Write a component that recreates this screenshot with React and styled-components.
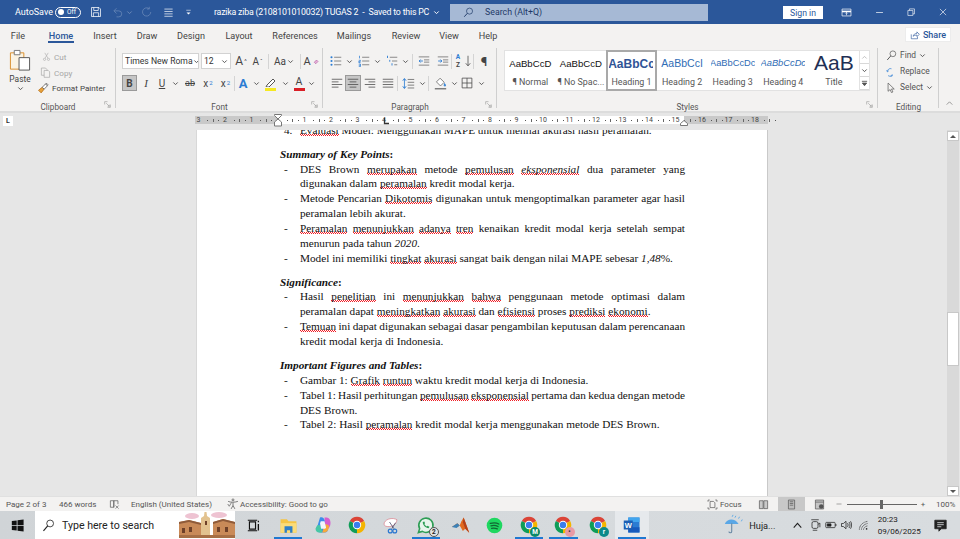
import React from "react";
import styled, { createGlobalStyle } from "styled-components";

const UI = 'Roboto, "Open Sans", sans-serif';
const Global = createGlobalStyle`
  html, body { margin: 0; padding: 0; background: #e6e6e6; overflow: hidden; }
  * { box-sizing: border-box; }
`;
const Shell = styled.div`width:960px;height:539px;display:flex;flex-direction:column;overflow:hidden;font-family:${UI};color:#444;`;

/* generic drawing */
const Svg = styled.svg`width:${p=>p.$s||14}px;height:${p=>p.$s||14}px;flex:none;display:block;fill:none;stroke:currentColor;stroke-width:1;`;
const Slot = styled.div`width:${p=>p.$w}px;height:100%;flex:none;display:flex;align-items:center;justify-content:center;color:${p=>p.$c||"inherit"};`;
const Chevron = ({c="#555"})=>(<Svg $s={7} viewBox="0 0 8 8" style={{color:c}}><path d="M1.5 2.8 4 5.3 6.5 2.8" strokeWidth="1.1"/></Svg>);

const B="#2b7cd3";const G="#666";
const paths={
  save:<><path d="M2 2h10l2 2v10H2z"/><path d="M5 2v4h6V2M4.5 14V9h7v5"/></>,
  undo:<><path d="M6 3 2.5 6.5 6 10"/><path d="M3 6.5h6a4 4 0 0 1 0 8H6"/></>,
  redo:<><path d="M13 8a5.5 5.5 0 1 1-2-4.3"/><path d="M11 1v3H8"/></>,
  menu:<path d="M2 3h12M2 6.5h12M2 10h12M2 13.5h12"/>,
  qat:<><path d="M4 4h8" /><path d="M4.5 8 8 11.5 11.5 8z" fill="currentColor" stroke="none"/></>,
  search:<><circle cx="9.5" cy="6" r="4.4"/><path d="M6.3 9.2 1.8 14.2" strokeWidth="1.4"/></>,
  display:<><path d="M1.5 3h13v10h-13z"/><path d="M1.5 6.5h13" strokeWidth="2.4"/><path d="M8 12V8M6.3 9.5 8 7.8l1.7 1.7"/></>,
  min:<path d="M3 8h10"/>,
  restore:<><path d="M3 5.5h8v8H3z"/><path d="M5.5 5.5V3h8v8H11"/></>,
  close:<path d="M3 3l10 10M13 3 3 13"/>,
  share:<><path d="M2 7v7h10v-3"/><path d="M5 10c.5-3 3-4.5 6-4.5V3l4 4-4 3.5V8c-2.5 0-4.5.7-6 2z"/></>,
  cut:<><circle cx="4.5" cy="13" r="2"/><circle cx="11.5" cy="13" r="2"/><path d="M5.5 11 11 1.5M10.500 11 5 1.500"/></>,
  copy:<><path d="M2 1.5h6l2 2v8.500H2z"/><path d="M6 5h6l2 2v8H6z" fill="#f3f2f1"/></>,
  painter:<><path d="M7 7 2 11l3.500 3.500 4-5z" fill="#e8a33d" stroke="#b36b14"/><path d="M7 7l2.500 2.500L14 5l-2.500-2.500z" fill="#fff" stroke="#555"/><path d="M11 3l1.500-1.500 2 2L13 5" stroke="#555"/></>,
  launcher:<><path d="M1.500 8V1.500H8" /><path d="M14.500 8v6.500H8"/><path d="M5 5l7 7M12 8.500V12H8.500"/></>,
  erase:<><path d="M12 9 9 6 4.500 10.500l3 3z" fill="#e6b3d8" stroke="#a23a92"/></>,
  left:<path d="M1 3h14M1 6.500h9M1 10h14M1 13.500h9"/>,
  center:<path d="M1 3h14M3.500 6.500h9M1 10h14M3.500 13.500h9"/>,
  right:<path d="M1 3h14M6 6.500h9M1 10h14M6 13.500h9"/>,
  justify:<path d="M1 3h14M1 6.500h14M1 10h14M1 13.500h14"/>,
  bullets:<><circle cx="2" cy="3" r="1.400" fill={B} stroke="none"/><circle cx="2" cy="8" r="1.400" fill={B} stroke="none"/><circle cx="2" cy="13" r="1.400" fill={B} stroke="none"/><path d="M5.500 3H15M5.500 8H15M5.500 13H15" stroke={G}/></>,
  numbers:<><path d="M2 1v3.500M1 7h2.200v1.500H1V10h2.300M1 12h2.300v3.500H1M1 13.700h2" stroke={B}/><path d="M5.500 3H15M5.500 8H15M5.500 13H15" stroke={G}/></>,
  multi:<><path d="M2 1v3M5 6.500v2.500M8 11v3" stroke={B} strokeWidth="1.200"/><path d="M5 3h10M8 8h7M11 13h4" stroke={G}/></>,
  outdent:<><path d="M1 2.500h14M1 13.500h14M8 6.500h7M8 9.500h7" stroke={G}/><path d="M6.500 8H1.500M3.500 6 1.500 8l2 2" stroke={B} strokeWidth="1.200"/></>,
  indent:<><path d="M1 2.500h14M1 13.500h14M8 6.500h7M8 9.500h7" stroke={G}/><path d="M1.500 8h5M4.500 6l2 2-2 2" stroke={B} strokeWidth="1.200"/></>,
  sortarrow:<path d="M8 1v13M5 11l3 3.500 3-3.500"/>,
  spacing:<><path d="M3 2v12" stroke={B}/><path d="M1 4.500 3 2l2 2.500M1 11.500 3 14l2-2.500" stroke={B} strokeWidth="1.200"/><path d="M7 3h8M7 6.500h8M7 10h8M7 13.500h8" stroke={G}/></>,
  shading:<><path d="M7.500 1.500 12.500 6.500 8 11 3 6z" fill="#fff" stroke={G}/><path d="M13 8c1 1.500 1.500 2 1 3-.5.500-1.500.300-1.500-1z" fill={B} stroke={B}/><path d="M1 14.500h14" stroke={G} strokeWidth="1.500"/></>,
  borders:<path d="M1.500 1.500h13v13h-13zM8 1.500v13M1.500 8h13"/>,
  find:<><circle cx="10" cy="5.500" r="4.200"/><path d="M7 8.500 1.800 14.500" strokeWidth="1.400"/></>,
  replaceA:<><path d="M8 4a4.500 4.500 0 0 0-6 4" stroke={B}/><path d="M3 14a5 5 0 0 0 6 0" stroke={B}/><path d="M1 6l1 2.500 2-1.500M9 12v2.500H6.500" stroke={B}/></>,
  select:<path d="M3 1.500v12l3-2.500 2 4.500 2-1-2-4.300h4z"/>,
  up:<path d="M3 10l5-5 5 5"/>,
  proof:<><path d="M2 2.500h5v9.500H2zM7 2.500h6v5"/><path d="M7 2.500V12"/><path d="M9.500 9.500l4.500 4.500M14 9.500 9.500 14" stroke={G}/></>,
  access:<><circle cx="8" cy="2.500" r="1.300"/><path d="M1.500 4.500c3 1.500 9 1.500 13 0M8 6v4M8 10l-2.500 4.500M8 10l2.500 4.500"/><path d="M1 8l2 3 3-5" stroke={G}/></>,
  focus:<><path d="M1.500 4V1.500H4M12 1.500h2.500V4M14.500 12v2.500H12M4 14.500H1.500V12"/><path d="M4.500 3.500h5l2 2v7h-7z"/></>,
  read:<><path d="M2 2.500h5.500v11.500H2zM8.500 2.500H14v11.500H8.500z" fill="#c9c9c9"/></>,
  print:<path d="M3.500 1.500h9v13h-9zM5.500 4h5M5.500 6.500h5M5.500 9h5" fill="#bdbdbd"/>,
  web:<><path d="M2 1.500h12v13H2zM2 4.500h12" fill="#c5c5c5"/><circle cx="10.500" cy="11" r="3.300" fill="#555" stroke="none"/></>,
  windows:<path d="M1 2.600 7 1.800v5.800H1zM8 1.600l7.500-1v7H8zM1 8.500h6v5.700l-6-.8zM8 8.500h7.500v6.900l-7.500-1z" fill="currentColor" stroke="none"/>,
  taskview:<><path d="M3 3.500h7.500v9H3zM1 1.500h11.500M1 14.500h11.500" strokeWidth="1.400"/><path d="M14 2v2M14 6v8" strokeWidth="1.600"/></>,
  caretup:<path d="M2.500 11 8 5l5.500 6" strokeWidth="1.600"/>,
  meet:<><rect x="4" y="3.500" width="8" height="9" rx="2"/><path d="M12 7l2.500-1.500V11"/><path d="M3 1h10M5 15h6"/></>,
  battery:<><rect x="1" y="4.500" width="12.500" height="7" rx="1"/><path d="M3 6.500h5v3H3z" fill="currentColor"/><path d="M14.500 7v2" strokeWidth="1.500"/></>,
  sound:<><path d="M2 6v4h2.500l3.500 3V3L4.500 6z"/><path d="M10 5.500c1 1.500 1 3.500 0 5M12 4c1.800 2.500 1.800 5.500 0 8M14 3c2 3 2 7 0 10"/></>,
  wifi:<><path d="M2 14c0-6 5-11 12-12M5 14c0-4 4-8 9-9M8 14c0-2.500 3-5 6-5.500" strokeDasharray="1.400 .6"/><circle cx="12.500" cy="13" r="1.200" fill="currentColor" stroke="none"/></>,
  notif:<><path d="M1 1.500h14v10.500H9l-3 3v-3H1z" fill="currentColor"/><path d="M4 4.500h8M4 7h8M4 9.500h5" stroke="#e4e7ea"/></>,
};
const I=({n,s=14,c})=><Svg $s={s} viewBox="0 0 16 16" style={c?{color:c}:undefined}>{paths[n]}</Svg>;

/* title bar */
const TitleBar=styled.div`height:24px;background:#2b579a;color:#fff;display:flex;align-items:center;flex:none;font-size:9px;`;
const AutoLabel=styled.span`margin-left:15px;width:40px;white-space:nowrap;`;
const Toggle=styled.div`width:26px;height:11px;border:1px solid #fff;border-radius:6px;display:flex;align-items:center;padding-left:2px;gap:3px;font-size:6.5px;`;
const Knob=styled.i`width:6px;height:6px;border-radius:50%;background:#fff;display:block;`;
const DocTitle=styled.div`width:236px;white-space:nowrap;font-size:8.8px;letter-spacing:-.2px;margin-left:21px;display:flex;align-items:center;gap:4px;`;
const SearchBox=styled.div`width:258px;height:17px;background:#a6b9d5;color:#1f3a68;display:flex;align-items:center;padding-left:13px;gap:11px;font-size:8.8px;`;
const SignIn=styled.div`width:40px;height:13px;margin-left:75px;margin-top:1px;background:#fff;color:#2b579a;font-size:8.7px;display:flex;align-items:center;justify-content:center;`;

/* tabs */
const TabRow=styled.div`height:23px;background:#f3f2f1;display:flex;flex:none;align-items:stretch;position:relative;`;
const Tab=styled.div`width:${p=>p.$w}px;flex:none;display:flex;align-items:center;justify-content:center;font-size:9.1px;position:relative;color:${p=>p.$on?"#2b579a":"#444"};font-weight:${p=>p.$on?500:400};
  ${p=>p.$on?`&::after{content:"";position:absolute;left:12px;right:12px;bottom:4px;height:2px;background:#2b579a;}`:""}`;
const Share=styled.div`margin-left:399px;margin-top:3px;width:46px;height:15px;background:#fff;border:1px solid #ececec;color:#2b579a;font-size:9px;font-weight:500;display:flex;align-items:center;justify-content:center;gap:3px;`;

/* ribbon */
const Ribbon=styled.div`height:66px;background:#f3f2f1;display:flex;flex:none;border-bottom:2px solid #dcdcdc;position:relative;`;
const Group=styled.section`width:${p=>p.$w}px;flex:none;height:100%;display:flex;flex-direction:column;position:relative;
  ${p=>p.$end?"":`&::after{content:"";position:absolute;right:0;top:1px;bottom:3px;width:1px;background:#cfcfcf;}`}`;
const GroupBody=styled.div`height:49px;flex:none;display:flex;flex-direction:${p=>p.$col?"column":"row"};padding-left:${p=>p.$pl||0}px;`;
const GroupLabel=styled.div`flex:1;display:flex;align-items:center;justify-content:center;font-size:8.2px;color:#555;padding-top:6px;`;
const Launcher=styled.span`position:absolute;right:5px;bottom:3px;color:#777;`;
const Paste=styled.div`width:38px;margin-left:1px;display:flex;flex-direction:column;align-items:center;font-size:8.4px;line-height:12px;padding-top:2px;color:#444;`;
const PasteGlyph=styled.div`height:23px;margin-bottom:1px;`;
const ClipList=styled.div`display:flex;flex-direction:column;padding-top:2px;margin-left:-2px;`;
const ClipItem=styled.div`height:17px;display:flex;align-items:center;font-size:8.1px;color:${p=>p.$off?"#a6a6a6":"#444"};gap:3px;padding-left:${p=>p.$pl||0}px;white-space:nowrap;`;
const Tools=styled.div`display:flex;flex-direction:column;padding-top:6px;gap:6px;`;
const ToolRow=styled.div`height:16px;display:flex;align-items:center;`;
const Combo=styled.div`width:${p=>p.$w}px;height:16px;margin-right:2px;background:#fff;border:1px solid #d2d2d2;display:flex;align-items:center;justify-content:space-between;padding:0 2px 0 2px;font-size:8.6px;color:#333;white-space:nowrap;flex:none;overflow:hidden;`;
const Glyph=styled.div`width:${p=>p.$w}px;flex:none;height:16px;display:flex;align-items:center;justify-content:center;font-family:${p=>p.$serif?'"Liberation Serif",serif':UI};font-size:${p=>p.$fs||10}px;font-weight:${p=>p.$b?700:400};font-style:${p=>p.$i?"italic":"normal"};color:${p=>p.$c||"#444"};text-decoration:${p=>p.$u||"none"};gap:1px;
  ${p=>p.$on?"background:#c6c6c6;border:1px solid #9a9a9a;":""}`;
const Sep=styled.i`width:${p=>p.$w||1}px;flex:none;height:15px;display:flex;justify-content:center;&::before{content:"";display:block;width:1px;height:100%;background:#d4d4d4;}`;
const ColorA=styled.div`width:${p=>p.$w}px;height:16px;flex:none;display:flex;flex-direction:column;align-items:center;justify-content:flex-end;font-size:10.500px;line-height:10px;color:#444;`;
const Swatch=styled.i`display:block;width:11px;height:3px;background:${p=>p.$c};margin-top:1px;`;
const Sub=styled.sub`font-size:6px;color:${B};line-height:0;`;
const Sup=styled.sup`font-size:6px;color:${p=>p.$c||B};line-height:0;`;
const SortStack=styled.div`width:${p=>p.$w}px;height:16px;flex:none;display:flex;flex-direction:column;align-items:center;justify-content:center;font-weight:700;`;
const SortLetter=styled.span`font-size:6.5px;line-height:8px;height:8px;color:${p=>p.$c||"#444"};`;

const Gallery=styled.div`margin:3px 0 0 7px;width:366px;height:41px;background:#fff;border:1px solid #e2e2e2;display:flex;`;
const Style=styled.div`width:50.600px;flex:none;overflow:hidden;height:${p=>p.$sel?"41px":"39px"};display:flex;flex-direction:column;align-items:center;${p=>p.$sel?"border:2px solid #a9a9a9;margin-top:-1px;":""}`;
const Sample=styled.div`height:24px;width:44px;display:flex;align-items:center;justify-content:center;overflow:hidden;white-space:nowrap;font-family:"Liberation Sans",sans-serif;font-size:${p=>p.$fs}px;color:${p=>p.$c};font-weight:${p=>p.$b?600:400};font-style:${p=>p.$i?"italic":"normal"};`;
const StyleName=styled.div`font-size:8.9px;color:#555;white-space:nowrap;height:14px;line-height:14px;`;
const Scrollers=styled.div`margin-left:auto;width:10px;display:flex;flex-direction:column;border-left:1px solid #e2e2e2;`;
const ScrollBtn=styled.div`flex:1;display:flex;align-items:center;justify-content:center;background:#fff;border-bottom:1px solid #d8d8d8;color:${p=>p.$off?"#bbb":"#555"};`;
const EditList=styled.div`display:flex;flex-direction:column;`;
const EditItem=styled.div`height:16px;display:flex;align-items:center;gap:3px;font-size:8.4px;color:#555;padding-left:8px;white-space:nowrap;`;
const Collapse=styled.div`width:21px;display:flex;align-items:flex-end;justify-content:center;padding-bottom:3px;color:#555;`;

/* ruler */
const RulerRow=styled.div`height:17px;background:#e6e6e6;display:flex;flex:none;padding-top:3px;position:relative;`;
const TabMark=styled.div`width:10px;height:10px;margin-left:3px;background:#fff;display:flex;align-items:center;justify-content:center;font-size:7px;font-weight:700;color:#333;`;
const RulerStrip=styled.div`margin-left:182px;width:573px;height:8px;padding-left:3.500px;display:flex;position:relative;background:linear-gradient(90deg,#c9c9c9 0 83px,#fff 83px 489px,#c9c9c9 489px);`;
const Cm=styled.div`width:26.500px;flex:none;height:100%;display:flex;align-items:center;justify-content:space-between;padding-right:6px;font-size:7px;color:#444;`;
const CmNum=styled.span`width:8px;margin-left:-4px;text-align:center;line-height:8px;`;
const Dot=styled.i`width:1px;height:1px;background:#555;display:block;`;
const Tick=styled.i`width:1px;height:3px;background:#666;display:block;`;
const RulerMark=styled.span`position:absolute;left:${p=>p.$x}px;top:${p=>p.$y}px;color:#555;line-height:0;`;

/* document */
const DocArea=styled.div`height:366px;background:#e6e6e6;display:flex;flex:none;overflow:hidden;`;
const PageSheet=styled.main`margin-left:196px;width:572px;height:100%;background:#fff;border-right:1px solid #c9c9c9;border-left:1px solid #d8d8d8;padding-left:83px;font-family:"Liberation Serif","Times New Roman",serif;font-size:11.240px;line-height:14.830px;color:#111;overflow:hidden;`;
const Body=styled.div`margin-top:-7.400px;width:405px;`;
const Heading=styled.div`font-weight:700;margin-top:9.300px;`;
const Em=styled.em`font-style:italic;`;
const Item=styled.div`display:flex;`;
const Dash=styled.span`width:20px;flex:none;padding-left:4px;`;
const ItemText=styled.div`flex:1;min-width:0;`;
const Line=styled.div`white-space:nowrap;word-spacing:${p=>p.$ws||0}px;${p=>p.$j?"text-align:justify;text-align-last:justify;":""}`;
const Sq=styled.span`background-image:repeating-linear-gradient(90deg,#f01c24 0 1px,transparent 1px 2px),repeating-linear-gradient(90deg,transparent 0 1px,#f01c24 1px 2px);background-size:100% 1px;background-repeat:no-repeat;background-position:0 calc(100% - 1px),0 100%;`;
const Scrollbar=styled.aside`margin-left:179px;width:12px;height:100%;background:#d9d9d9;display:flex;flex-direction:column;position:relative;padding-top:1px;`;
const SbBtn=styled.div`height:10px;background:#fff;border:1px solid #c8c8c8;display:flex;align-items:center;justify-content:center;flex:none;`;
const SbArrow=styled.i`display:block;width:0;height:0;border-left:3px solid transparent;border-right:3px solid transparent;${p=>p.$down?"border-top:3px solid #555;":"border-bottom:3px solid #555;"}`;
const SbThumb=styled.div`position:absolute;left:0;right:0;top:182px;height:54px;background:#fff;border:1px solid #c8c8c8;`;
const SbGap=styled.div`flex:1;`;

/* status */
const StatusBar=styled.footer`height:15px;background:#f3f2f1;border-top:1px solid #e0e0e0;flex:none;display:flex;align-items:center;font-size:8px;color:#555;white-space:nowrap;padding-right:6px;`;
const Stat=styled.div`margin-left:${p=>p.$ml||0}px;height:100%;display:flex;align-items:center;gap:${p=>p.$gap||0}px;flex:none;width:${p=>p.$w?p.$w+"px":"auto"};justify-content:${p=>p.$center?"center":"flex-start"};background:${p=>p.$on?"#c8c8c8":"transparent"};`;
const StatusEnd=styled.div`margin-left:auto;height:100%;display:flex;align-items:center;flex:none;`;
const Slider=styled.div`margin-left:4px;width:70px;height:1px;background:#666;position:relative;flex:none;`;
const SliderThumb=styled.i`position:absolute;left:33px;top:-4px;width:3px;height:9px;background:#666;display:block;`;

/* taskbar */
const Taskbar=styled.nav`height:28px;flex:none;background:linear-gradient(90deg,#d0d4d7,#d6dadd 60%,#d8dcdf);display:flex;align-items:stretch;color:#111;`;
const Start=styled.div`width:35px;flex:none;display:flex;align-items:center;justify-content:center;`;
const SearchTask=styled.div`width:200px;flex:none;background:#fff;display:flex;align-items:center;padding-left:7px;gap:7px;font-size:10.600px;color:#222;white-space:nowrap;position:relative;overflow:hidden;`;
const Scene=styled.span`position:absolute;right:0;top:0;line-height:0;`;
const Pin=styled.div`width:${p=>p.$w||34.400}px;flex:none;display:flex;align-items:center;justify-content:center;position:relative;background:${p=>p.$active?"#e6e9ec":"transparent"};
  ${p=>p.$run?`&::after{content:"";position:absolute;left:3px;right:3px;bottom:0;height:2px;background:#1f78d1;}`:""}`;
const Badge=styled.span`position:absolute;right:${p=>p.$r||5}px;bottom:${p=>p.$b||2}px;width:10px;height:10px;border-radius:50%;background:${p=>p.$c};color:${p=>p.$t||"#fff"};font-size:6.500px;font-weight:700;line-height:10px;text-align:center;${p=>p.$ring?"border:1px solid #555;line-height:8px;":""}`;
const Weather=styled.div`margin-left:74px;display:flex;align-items:center;gap:4px;font-size:9.2px;width:66px;flex:none;color:#222;`;
const Tray=styled.div`width:${p=>p.$w}px;flex:none;display:flex;align-items:center;justify-content:center;color:#222;`;
const Clock=styled.div`width:40px;margin-left:6px;flex:none;display:flex;flex-direction:column;align-items:center;justify-content:center;font-size:8.100px;line-height:12px;color:#222;white-space:nowrap;`;

const Chrome=({s=18})=>(<Svg $s={s} viewBox="0 0 24 24" style={{stroke:"none"}}>
  <path d="M12 12 2.470 6.500A11 11 0 0 1 21.530 6.500Z" fill="#db4437"/>
  <path d="M12 12 21.530 6.500A11 11 0 0 1 12 23Z" fill="#f4b400"/>
  <path d="M12 12 12 23A11 11 0 0 1 2.470 6.500Z" fill="#0f9d58"/>
  <circle cx="12" cy="12" r="5.600" fill="#fff"/><circle cx="12" cy="12" r="4.300" fill="#3b7ded"/></Svg>);

const Explorer=()=>(<Svg $s={19} viewBox="0 0 24 24" style={{stroke:"none"}}>
  <path d="M2 4h8l2 2.500h10V21H2z" fill="#f6c544"/><path d="M2 9h20v12H2z" fill="#fbdc7a"/>
  <path d="M7 13h10v8H14v-3h-4v3H7z" fill="#2f7fc8"/></Svg>);
const Copilot=()=>(<Svg $s={18} viewBox="0 0 24 24" style={{stroke:"none"}}>
  <path d="M8 2c3-1 5 0 6 3l4 12c1 3-1 5-4 5H9C5 22 3 20 3 17c0-2 1-3 2-5z" fill="#3b8dea"/>
  <path d="M14 2h3c3 0 5 3 5 7 0 3-1 6-3 8l-4-1z" fill="#d55fd0"/>
  <path d="M4 13c2-2 5-1 6 2l1 7H7c-3 0-5-2-5-5z" fill="#47c7a5"/>
  <path d="M14 11c2 0 5 0 6 2 0 4-2 9-6 9h-3z" fill="#f7a93b"/>
  <path d="M9 7h5l2 8-1 2H9.500L8 10z" fill="#f3f5fb"/></Svg>);
const Snip=()=>(<Svg $s={18} viewBox="0 0 24 24" style={{stroke:"none"}}>
  <path d="M3 9c3-6 12-7 17-4-1 6-6 10-13 9-3 0-5-2-4-5z" fill="#fff" stroke="#d9838f"/>
  <path d="M10 8l6 9M18 9l-5 8" stroke="#446" strokeWidth="1" fill="none"/>
  <circle cx="11" cy="20" r="2.600" fill="none" stroke="#2a77d0" strokeWidth="1.600"/><circle cx="17" cy="20" r="2.600" fill="none" stroke="#2a77d0" strokeWidth="1.600"/></Svg>);
const Whatsapp=()=>(<Svg $s={19} viewBox="0 0 24 24" style={{stroke:"#2f9e56",strokeWidth:2}}>
  <path d="M3 21l1.600-5A9 9 0 1 1 8 19.500z" fill="#e9f5ec"/>
  <path d="M8.500 7.500c0 4 3.500 7.500 7.500 8l1-2-2.500-1.300-1 1c-1.500-.7-2.500-1.800-3-3l1-1L10.500 7z" fill="#2f9e56" stroke="none"/></Svg>);
const Matlab=()=>(<Svg $s={19} viewBox="0 0 24 24" style={{stroke:"none"}}>
  <path d="M1 14 8 9l3 3 2-5 3-5 7 19-5-5-3 3-4-7-3 2z" fill="#e26a1f"/>
  <path d="M1 14 8 9l3 3-4 3z" fill="#3c82b8"/><path d="M16 2l7 19-5-5-3-8z" fill="#b3411a"/></Svg>);
const Spotify=()=>(<Svg $s={17} viewBox="0 0 24 24" style={{stroke:"none"}}>
  <circle cx="12" cy="12" r="11" fill="#1ed760"/>
  <path d="M6 9c4-1 9-1 12 1M7 12.500c3-1 7-.8 10 1M8 16c3-.7 5-.5 8 .8" stroke="#163" strokeWidth="1.800" fill="none" strokeLinecap="round"/></Svg>);
const Word=()=>(<Svg $s={18} viewBox="0 0 24 24" style={{stroke:"none"}}>
  <path d="M7 2h15v20H7z" fill="#2b7cd3"/><path d="M7 2h15v6H7z" fill="#41a5ee"/><path d="M7 15h15v7H7z" fill="#185abd"/>
  <path d="M1 6h12v12H1z" fill="#1d5fb4"/><text x="7" y="15.500" textAnchor="middle" fontSize="10" fontWeight="700" fill="#fff" fontFamily="Liberation Sans">W</text></Svg>);
const Rain=()=>(<Svg $s={22} viewBox="0 0 24 24" style={{stroke:"none"}}>
  <path d="M2 11C4 5 13 4 17 11z" fill="#5aa7e6"/><path d="M9.500 10v9c0 2-3 2-3 0" stroke="#6b8aa5" strokeWidth="1.200" fill="none"/>
  <path d="M14 2l-1 2M18 3l-1 2M21 6l-1 2M11 1l-1 2" stroke="#5aa7e6" strokeWidth="1"/></Svg>);
const Town=()=>(<svg width="56" height="27" viewBox="0 0 56 27">
  <ellipse cx="13" cy="5" rx="7" ry="3" fill="#eec3d2"/><ellipse cx="40" cy="4" rx="8" ry="3" fill="#eec3d2"/>
  <path d="M0 27V11l10-2 12 3v15z" fill="#c98a58"/><path d="M34 27V11l10-3 12 3v16z" fill="#c98a58"/>
  <path d="M0 11 10 9l12 3v2L10 11 0 13zM34 11l10-3 12 3v2l-12-3-10 3z" fill="#8f5b3a"/>
  <path d="M22 27V7l3-2 .5-4h2l.5 4 3 2v20z" fill="#e2c28f"/><path d="M26 10h2v4h-2zM3 17h3v5H3zM10 16h3v5h-3zM38 16h3v5h-3zM46 16h3v5h-3z" fill="#6e4028"/>
  <path d="M0 24h56v3H0z" fill="#a66f45"/></svg>);

const tabs=[["File",36],["Home",50,1],["Insert",38],["Draw",46],["Design",42],["Layout",54],["References",58],["Mailings",60],["Review",44],["View",42],["Help",36]];
const styleSet=[
  {s:"AaBbCcD",n:"¶ Normal",fs:9.600,c:"#111"},
  {s:"AaBbCcD",n:"¶ No Spac...",fs:9.600,c:"#111"},
  {s:"AaBbCc",n:"Heading 1",fs:12,c:"#2f5496",b:1,sel:1},
  {s:"AaBbCcI",n:"Heading 2",fs:10.500,c:"#2f6cb5"},
  {s:"AaBbCcDc",n:"Heading 3",fs:9.300,c:"#2f6cb5"},
  {s:"AaBbCcDc",n:"Heading 4",fs:9.300,c:"#2f6cb5",i:1},
  {s:"AaB",n:"Title",fs:21,c:"#1f2f54"},
];
const cms=[3,2,1,0,1,2,3,4,5,6,7,8,9,10,11,12,13,14,15,16,17,18];

export default function App(){
  return <Shell><Global/>
    <TitleBar>
      <AutoLabel>AutoSave</AutoLabel>
      <Toggle><Knob/>Off</Toggle>
      <Slot $w={9}/><Slot $w={12}><I n="save" s={12}/></Slot>
      <Slot $w={9}/><Slot $w={14} $c="#6b89b8"><I n="undo" s={12}/></Slot><Slot $w={8} $c="#6b89b8"><Chevron c="#6b89b8"/></Slot>
      <Slot $w={8}/><Slot $w={12} $c="#6b89b8"><I n="redo" s={12}/></Slot>
      <Slot $w={9}/><Slot $w={12}><I n="menu" s={11}/></Slot>
      <Slot $w={9}/><Slot $w={10}><I n="qat" s={9}/></Slot>
      <DocTitle>razika ziba (2108101010032) TUGAS 2&nbsp; -&nbsp; Saved to this PC <Chevron c="#fff"/></DocTitle>
      <SearchBox><I n="search" s={11} c="#1f3a68"/>Search (Alt+Q)</SearchBox>
      <SignIn>Sign in</SignIn>
      <Slot $w={14}/><Slot $w={18}><I n="display" s={11}/></Slot>
      <Slot $w={15}/><Slot $w={18}><I n="min" s={11}/></Slot>
      <Slot $w={14}/><Slot $w={18}><I n="restore" s={10}/></Slot>
      <Slot $w={14}/><Slot $w={18}><I n="close" s={10}/></Slot>
    </TitleBar>

    <TabRow>
      {tabs.map(([t,w,on])=><Tab key={t} $w={w} $on={on}>{t}</Tab>)}
      <Share><I n="share" s={10}/>Share</Share>
    </TabRow>

    <Ribbon>
      <Group $w={116}>
        <GroupBody>
          <Paste><PasteGlyph>
            <svg width="24" height="23" viewBox="0 0 24 24"><path d="M2 4h14v17H2z" fill="#fbf3e2" stroke="#d98e2b"/><path d="M6 1.500h6V6H6z" fill="#fff" stroke="#777"/><path d="M11 9h11v13H11z" fill="#fff" stroke="#555"/></svg>
          </PasteGlyph>Paste<Chevron/></Paste>
          <ClipList>
            <ClipItem $off $pl={5}><I n="cut" s={9}/>Cut</ClipItem>
            <ClipItem $off $pl={3}><I n="copy" s={11}/>Copy</ClipItem>
            <ClipItem $pl={0}><I n="painter" s={12}/>Format Painter</ClipItem>
          </ClipList>
        </GroupBody>
        <GroupLabel>Clipboard</GroupLabel>
        <Launcher><I n="launcher" s={7}/></Launcher>
      </Group>

      <Group $w={207}>
        <GroupBody $pl={6}>
          <Tools>
            <ToolRow>
              <Combo $w={77}>Times New Roma <Chevron/></Combo>
              <Combo $w={30}>12 <Chevron/></Combo>
              <Glyph $w={16} $fs={12}>A<Sup $c="#444">^</Sup></Glyph>
              <Glyph $w={17} $fs={10}>A<Sup $c="#444">ˇ</Sup></Glyph>
              <Sep $w={5}/>
              <Glyph $w={26} $fs={10}>Aa <Chevron/></Glyph>
              <Sep $w={7}/>
              <Glyph $w={15} $fs={11}>A<I n="erase" s={8}/></Glyph>
            </ToolRow>
            <ToolRow>
              <Glyph $w={15} $b $on $fs={10}>B</Glyph>
              <Glyph $w={18} $i $serif $fs={11}>I</Glyph>
              <Glyph $w={14} $u="underline" $fs={10}>U</Glyph>
              <Slot $w={12}><Chevron/></Slot>
              <Glyph $w={18} $u="line-through" $fs={9}>ab</Glyph>
              <Glyph $w={18} $fs={10}>x<Sub>2</Sub></Glyph>
              <Glyph $w={17} $fs={10}>x<Sup>2</Sup></Glyph>
              <Sep $w={1}/>
              <Glyph $w={16} $b $c="#2b7cd3" $fs={13}>A</Glyph>
              <Slot $w={10}><Chevron/></Slot>
              <ColorA $w={18}><svg width="11" height="9" viewBox="0 0 11 9"><path d="M2 7 8 1l2 2-6 6H1z" fill="#fff" stroke="#555"/></svg><Swatch $c="#f5e921"/></ColorA>
              <Slot $w={12}><Chevron/></Slot>
              <ColorA $w={16}>A<Swatch $c="#d91f26"/></ColorA>
              <Slot $w={9}><Chevron/></Slot>
            </ToolRow>
          </Tools>
        </GroupBody>
        <GroupLabel>Font</GroupLabel>
        <Launcher><I n="launcher" s={7}/></Launcher>
      </Group>

      <Group $w={174}>
        <GroupBody $pl={6}>
          <Tools>
            <ToolRow>
              <Slot $w={14}><I n="bullets" s={12}/></Slot><Slot $w={13}><Chevron/></Slot>
              <Slot $w={15}><I n="numbers" s={12}/></Slot><Slot $w={13}><Chevron/></Slot>
              <Slot $w={15}><I n="multi" s={12}/></Slot><Slot $w={13}><Chevron/></Slot>
              <Sep $w={1}/><Slot $w={22}><I n="outdent" s={12}/></Slot><Slot $w={16}><I n="indent" s={12}/></Slot>
              <Sep $w={1}/>
              <SortStack $w={12}><SortLetter $c="#2b7cd3">A</SortLetter><SortLetter>Z</SortLetter></SortStack>
              <Slot $w={8}><I n="sortarrow" s={12}/></Slot>
              <Sep $w={3}/>
              <Glyph $w={18} $b $fs={13}>¶</Glyph>
            </ToolRow>
            <ToolRow>
              <Slot $w={16}><I n="left" s={12}/></Slot>
              <Glyph $w={16} $on><I n="center" s={12}/></Glyph>
              <Slot $w={18}><I n="right" s={12}/></Slot>
              <Slot $w={17}><I n="justify" s={12}/></Slot>
              <Sep $w={3}/>
              <Slot $w={19}><I n="spacing" s={13}/></Slot><Slot $w={8}><Chevron/></Slot>
              <Sep $w={5}/>
              <Slot $w={18}><I n="shading" s={13}/></Slot><Slot $w={10}><Chevron/></Slot>
              <Slot $w={16}><I n="borders" s={12}/></Slot><Slot $w={12}><Chevron/></Slot>
            </ToolRow>
          </Tools>
        </GroupBody>
        <GroupLabel>Paragraph</GroupLabel>
        <Launcher><I n="launcher" s={7}/></Launcher>
      </Group>

      <Group $w={381}>
        <GroupBody>
          <Gallery>
            {styleSet.map(x=><Style key={x.n} $sel={x.sel}>
              <Sample $fs={x.fs} $c={x.c} $b={x.b} $i={x.i}>{x.s}</Sample>
              <StyleName>{x.n}</StyleName>
            </Style>)}
            <Scrollers>
              <ScrollBtn $off><Svg $s={7} viewBox="0 0 8 8"><path d="M1.500 5.200 4 2.700l2.500 2.500"/></Svg></ScrollBtn>
              <ScrollBtn><Chevron/></ScrollBtn>
              <ScrollBtn><Svg $s={7} viewBox="0 0 8 8"><path d="M1 1.500h6M1.500 3.500 4 6.500l2.500-3z" fill="currentColor"/></Svg></ScrollBtn>
            </Scrollers>
          </Gallery>
        </GroupBody>
        <GroupLabel>Styles</GroupLabel>
        <Launcher><I n="launcher" s={7}/></Launcher>
      </Group>

      <Group $w={61}>
        <GroupBody $col>
          <EditList>
            <EditItem><I n="find" s={11}/>Find <Chevron/></EditItem>
            <EditItem><I n="replaceA" s={11}/>Replace</EditItem>
            <EditItem><I n="select" s={11}/>Select <Chevron/></EditItem>
          </EditList>
        </GroupBody>
        <GroupLabel>Editing</GroupLabel>
      </Group>
      <Collapse><I n="up" s={9}/></Collapse>
    </Ribbon>

    <RulerRow>
      <TabMark>L</TabMark>
      <RulerStrip>
        {cms.map((n,i)=><Cm key={i}>
          <CmNum>{n===0?"":n}</CmNum><Dot/><Tick/><Dot/>
        </Cm>)}
        <RulerMark $x={79} $y={-2}><svg width="8" height="13" viewBox="0 0 8 13"><path d="M.5.500h7v1L4 5 .5 1.500zM4 5l3.500 3v4H.5V8z" fill="#fff" stroke="#777"/></svg></RulerMark>
        <RulerMark $x={188} $y={2}><svg width="6" height="7" viewBox="0 0 6 7"><path d="M1.500 0v5.500H6" fill="none" stroke="#333" strokeWidth="1.300"/></svg></RulerMark>
        <RulerMark $x={485} $y={4}><svg width="8" height="6" viewBox="0 0 8 6"><path d="M.5 5.500v-2L4 .5l3.500 3v2z" fill="#fff" stroke="#777"/></svg></RulerMark>
      </RulerStrip>
    </RulerRow>

    <DocArea>
      <PageSheet>
        <Body>
          <Item><Dash>4.</Dash><ItemText><Line><Sq>Evaluasi</Sq> Model: Menggunakan MAPE untuk menilai akurasi hasil peramalan.</Line></ItemText></Item>
          <Heading><Em>Summary of Key Points</Em>:</Heading>
          <Item><Dash>-</Dash><ItemText>
            <Line $j>DES Brown <Sq>merupakan</Sq> metode <Sq>pemulusan</Sq> <Em><Sq>eksponensial</Sq></Em> dua parameter yang</Line>
            <Line>digunakan dalam <Sq>peramalan</Sq> kredit modal kerja.</Line>
          </ItemText></Item>
          <Item><Dash>-</Dash><ItemText>
            <Line $j>Metode Pencarian <Sq>Dikotomis</Sq> digunakan untuk mengoptimalkan parameter agar hasil</Line>
            <Line>peramalan lebih akurat.</Line>
          </ItemText></Item>
          <Item><Dash>-</Dash><ItemText>
            <Line $j><Sq>Peramalan</Sq> <Sq>menunjukkan</Sq> <Sq>adanya</Sq> <Sq>tren</Sq> kenaikan kredit modal kerja setelah sempat</Line>
            <Line>menurun pada tahun <Em>2020</Em>.</Line>
          </ItemText></Item>
          <Item><Dash>-</Dash><ItemText>
            <Line>Model ini memiliki <Sq>tingkat</Sq> <Sq>akurasi</Sq> sangat baik dengan nilai MAPE sebesar <Em>1,48</Em>%.</Line>
          </ItemText></Item>
          <Heading><Em>Significance</Em>:</Heading>
          <Item><Dash>-</Dash><ItemText>
            <Line $j>Hasil <Sq>penelitian</Sq> ini <Sq>menunjukkan</Sq> <Sq>bahwa</Sq> penggunaan metode optimasi dalam</Line>
            <Line>peramalan dapat <Sq>meningkatkan</Sq> <Sq>akurasi</Sq> dan <Sq>efisiensi</Sq> proses <Sq>prediksi</Sq> <Sq>ekonomi</Sq>.</Line>
          </ItemText></Item>
          <Item><Dash>-</Dash><ItemText>
            <Line $j $ws={-0.7}><Sq>Temuan</Sq> ini dapat digunakan sebagai dasar pengambilan keputusan dalam perencanaan</Line>
            <Line>kredit modal kerja di Indonesia.</Line>
          </ItemText></Item>
          <Heading><Em>Important Figures and Tables</Em>:</Heading>
          <Item><Dash>-</Dash><ItemText><Line>Gambar 1: <Sq>Grafik</Sq> <Sq>runtun</Sq> waktu kredit modal kerja di Indonesia.</Line></ItemText></Item>
          <Item><Dash>-</Dash><ItemText>
            <Line $j $ws={-0.7}>Tabel 1: Hasil perhitungan <Sq>pemulusan</Sq> <Sq>eksponensial</Sq> pertama dan kedua dengan metode</Line>
            <Line>DES Brown.</Line>
          </ItemText></Item>
          <Item><Dash>-</Dash><ItemText><Line>Tabel 2: Hasil <Sq>peramalan</Sq> kredit modal kerja menggunakan metode DES Brown.</Line></ItemText></Item>
        </Body>
      </PageSheet>
      <Scrollbar>
        <SbBtn><SbArrow/></SbBtn><SbGap/><SbBtn><SbArrow $down/></SbBtn>
        <SbThumb/>
      </Scrollbar>
    </DocArea>

    <StatusBar>
      <Stat $ml={6} $w={53}>Page 2 of 3</Stat>
      <Stat $w={50}>466 words</Stat>
      <Stat $w={22}><I n="proof" s={11}/></Stat>
      <Stat $w={96}>English (United States)</Stat>
      <Stat $gap={1}><I n="access" s={12}/>Accessibility: Good to go</Stat>
      <StatusEnd>
        <Stat $w={36} $gap={2}><I n="focus" s={11}/>Focus</Stat>
        <Stat $ml={13} $w={14} $center><I n="read" s={11}/></Stat>
        <Stat $ml={8} $w={27} $on $center><I n="print" s={11}/></Stat>
        <Stat $ml={7} $w={14} $center><I n="web" s={11}/></Stat>
        <Stat $ml={9} $w={8} $center><I n="min" s={8}/></Stat>
        <Slider><SliderThumb/></Slider>
        <Stat $ml={3} $w={6} $center>+</Stat>
        <Stat $ml={10} $w={18}>100%</Stat>
      </StatusEnd>
    </StatusBar>

    <Taskbar>
      <Start><I n="windows" s={13}/></Start>
      <SearchTask><I n="find" s={13}/>Type here to search<Scene><Town/></Scene></SearchTask>
      <Pin $w={36}><I n="taskview" s={13}/></Pin>
      <Pin $run><Explorer/></Pin>
      <Pin><Copilot/></Pin>
      <Pin><Chrome/></Pin>
      <Pin><Snip/></Pin>
      <Pin $run><Whatsapp/><Badge $c="#dfe3e5" $t="#222" $ring $r={4}>2</Badge></Pin>
      <Pin><Matlab/></Pin>
      <Pin><Spotify/></Pin>
      <Pin $run><Chrome/><Badge $c="#0b8a6a" $r={6}>M</Badge></Pin>
      <Pin $run><Chrome/><Badge $c="#e99aa5" $t="#333" $r={6}>•</Badge></Pin>
      <Pin><Chrome/><Badge $c="#0b8a8a" $r={6}>r</Badge></Pin>
      <Pin $active $run><Word/></Pin>
      <Weather><Rain/>Huja...</Weather>
      <Tray $w={17}><I n="caretup" s={11}/></Tray>
      <Tray $w={17}><I n="meet" s={12}/></Tray>
      <Tray $w={15}><I n="battery" s={12}/></Tray>
      <Tray $w={15}><I n="sound" s={12}/></Tray>
      <Tray $w={20}><I n="wifi" s={11}/></Tray>
      <Clock>20:23<br/>09/06/2025</Clock>
      <Tray $w={42}><I n="notif" s={13}/></Tray>
    </Taskbar>
  </Shell>;
}
